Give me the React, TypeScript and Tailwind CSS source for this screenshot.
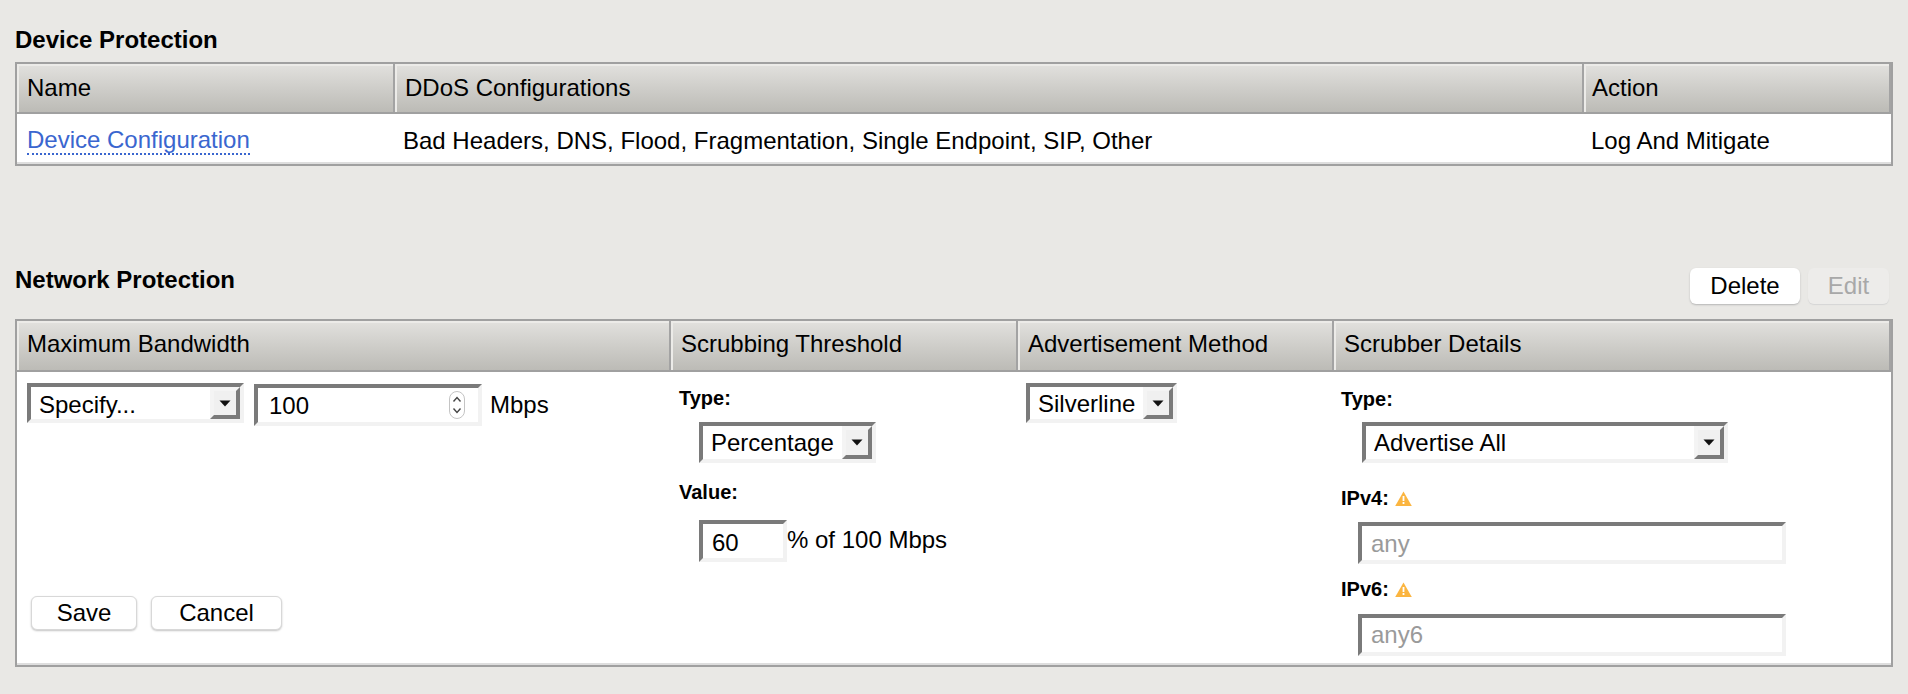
import React from "react";

const headBase =
  "flex items-center h-full bg-gradient-to-b from-[#e2e1de] to-[#bcbbb6] shadow-[inset_2px_2px_0_#ecebe8] border-r-2 border-[#a3a3a3]";
const headCell = `${headBase} pl-[10px]`;
const well =
  "border-4 border-t-[#7a7a7a] border-l-[#7a7a7a] border-r-[#f2f2f2] border-b-[#f2f2f2] bg-white outline-none text-[24px]";
const label = "block text-[20px] leading-[24px] font-bold text-black";

function Select({
  value,
  width,
  height,
  className = "",
  inner = "",
}: {
  value: string;
  width: string;
  height: string;
  className?: string;
  inner?: string;
}) {
  return (
    <div className={`relative ${width} ${height} ${className}`}>
      <select
        defaultValue={value}
        className={`${well} text-black appearance-none w-full h-full pl-2 leading-[28px] rounded-none ${inner}`}
      >
        <option>{value}</option>
      </select>
      <div className="absolute top-[4px] right-[4px] bottom-[4px] w-[30px] flex items-center justify-center bg-[#f0f0f0] border-r-4 border-b-4 border-r-[#7a7a7a] border-b-[#7a7a7a] border-t-4 border-l-4 border-t-[#f4f4f4] border-l-[#f4f4f4] pointer-events-none">
        <svg width="12" height="7" viewBox="0 0 12 7">
          <path d="M0.5 0.5H11.5L6 6.5Z" fill="#111" />
        </svg>
      </div>
    </div>
  );
}

function Warning() {
  return (
    <svg width="17" height="15" viewBox="0 0 17 15" className="ml-[6px]">
      <path d="M8.5 0.5L16.8 15H0.2Z" fill="#fbb540" />
      <rect x="7.6" y="5" width="1.8" height="5" fill="#fff" />
      <rect x="7.6" y="11" width="1.8" height="2" fill="#fff" />
    </svg>
  );
}

function Btn({ children, className = "" }: { children: React.ReactNode; className?: string }) {
  return (
    <button type="button" className={`flex items-center justify-center rounded-[6px] text-[24px] leading-none ${className}`}>
      {children}
    </button>
  );
}

export default function App() {
  return (
    <div
      className="h-[694px] bg-[#e9e8e5] pl-[15px] pr-[15px] text-black overflow-hidden"
      style={{ fontFamily: '"Liberation Sans", Arial, sans-serif' }}
    >
      {/* Device Protection */}
      <h2 className="pt-[26px] h-[62px] text-[24px] leading-[28px] font-bold">Device Protection</h2>
      <div className="border-2 border-[#a0a0a0] bg-white text-[24px]">
        <div className="flex h-[48px]">
          <div className={`${headCell} w-[378px]`}>Name</div>
          <div className={`${headCell} w-[1189px]`}>DDoS Configurations</div>
          <div className={`${headBase} pl-[8px] flex-1 border-r-0`}>Action</div>
        </div>
        <div className="flex h-[52px] items-center pt-[5px] border-t-2 border-[#a0a0a0] border-b-2 border-b-[#dedede]">
          <div className="w-[378px] pl-[10px] flex">
            <a className="text-[#3a66cf] border-b-2 border-dotted border-[#3a66cf] leading-[22px] pb-[2px] mt-[2px]">
              Device Configuration
            </a>
          </div>
          <div className="w-[1189px] pl-[8px]">Bad Headers, DNS, Flood, Fragmentation, Single Endpoint, SIP, Other</div>
          <div className="flex-1 pl-[7px]">Log And Mitigate</div>
        </div>
      </div>

      {/* Network Protection */}
      <div className="h-[153px] pt-[102px] pr-[4px] flex items-start justify-between">
        <h2 className="mt-[-2px] text-[24px] leading-[28px] font-bold">Network Protection</h2>
        <div className="flex gap-2">
          <Btn className="w-[110px] h-[36px] bg-white shadow-[0_1px_2px_#b5b5b5]">Delete</Btn>
          <Btn className="w-[81px] h-[36px] bg-[#edecea] text-[#a8a8a8] shadow-[0_1px_1px_#d5d5d5]">Edit</Btn>
        </div>
      </div>
      <div className="border-2 border-[#a0a0a0] bg-white text-[24px]">
        <div className="flex h-[49px]">
          <div className={`${headCell} pb-[3px] w-[654px]`}>Maximum Bandwidth</div>
          <div className={`${headCell} pb-[3px] w-[347px]`}>Scrubbing Threshold</div>
          <div className={`${headCell} pb-[3px] w-[316px]`}>Advertisement Method</div>
          <div className={`${headCell} pb-[3px] flex-1 border-r-0`}>Scrubber Details</div>
        </div>
        <div className="flex h-[295px] border-t-2 border-[#a0a0a0] border-b-2 border-b-[#dedede]">
          <div className="w-[654px] pl-[10px] pt-[11px] pb-[33px] flex flex-col justify-between">
            <div className="flex items-start">
              <Select value="Specify..." width="w-[217px]" height="h-[40px]" inner="pt-[3px]" />
              <div className="relative ml-[10px] mt-px w-[228px] h-[42px]">
                <input readOnly defaultValue="100" className={`${well} text-black w-full h-full pl-[11px] pt-[1px]`} />
                <svg width="16" height="28" viewBox="0 0 16 28" className="absolute top-[7px] left-[195px]">
                  <rect x="0.5" y="0.5" width="15" height="27" rx="7.5" fill="#fff" stroke="#c4c4c4" />
                  <path d="M4.5 10.5L8 6.5L11.5 10.5" fill="none" stroke="#444" strokeWidth="1.4" />
                  <path d="M4.5 17.5L8 21.5L11.5 17.5" fill="none" stroke="#444" strokeWidth="1.4" />
                </svg>
              </div>
              <span className="ml-2 mt-[8px] leading-[28px]">Mbps</span>
            </div>
            <div className="flex gap-[14px] pl-[4px]">
              <Btn className="w-[106px] h-[34px] bg-white border border-[#d8d8d8] shadow-[0_1px_2px_#c4c4c4]">Save</Btn>
              <Btn className="w-[131px] h-[34px] bg-white border border-[#d8d8d8] shadow-[0_1px_2px_#c4c4c4]">Cancel</Btn>
            </div>
          </div>
          <div className="w-[347px] pl-[8px] pt-[14px]">
            <label className={label}>Type:</label>
            <Select value="Percentage" width="w-[177px]" height="h-[41px]" className="ml-[20px] mt-[12px]" />
            <label className={`${label} mt-[17px]`}>Value:</label>
            <div className="flex items-start ml-[20px] mt-[16px]">
              <input readOnly defaultValue="60" className={`${well} text-black w-[88px] h-[42px] pl-[9px] pt-[4px]`} />
              <span className="mt-[6px] leading-[28px]">% of 100 Mbps</span>
            </div>
          </div>
          <div className="w-[316px] pl-[8px] pt-[11px]">
            <Select value="Silverline" width="w-[151px]" height="h-[40px]" inner="pt-[2px]" />
          </div>
          <div className="flex-1 pl-[7px] pt-[15px]">
            <label className={label}>Type:</label>
            <Select value="Advertise All" width="w-[366px]" height="h-[41px]" className="ml-[21px] mt-[11px]" />
            <label className={`${label} mt-[23px] flex items-center`}>
              IPv4:
              <Warning />
            </label>
            <input readOnly defaultValue="any" className={`${well} text-[#9a9a9a] block ml-[17px] mt-[12px] w-[428px] h-[42px] pl-[9px] pt-[2px]`} />
            <label className={`${label} mt-[13px] flex items-center`}>
              IPv6:
              <Warning />
            </label>
            <input readOnly defaultValue="any6" className={`${well} text-[#9a9a9a] block ml-[17px] mt-[13px] w-[428px] h-[42px] pl-[9px]`} />
          </div>
        </div>
      </div>
    </div>
  );
}
